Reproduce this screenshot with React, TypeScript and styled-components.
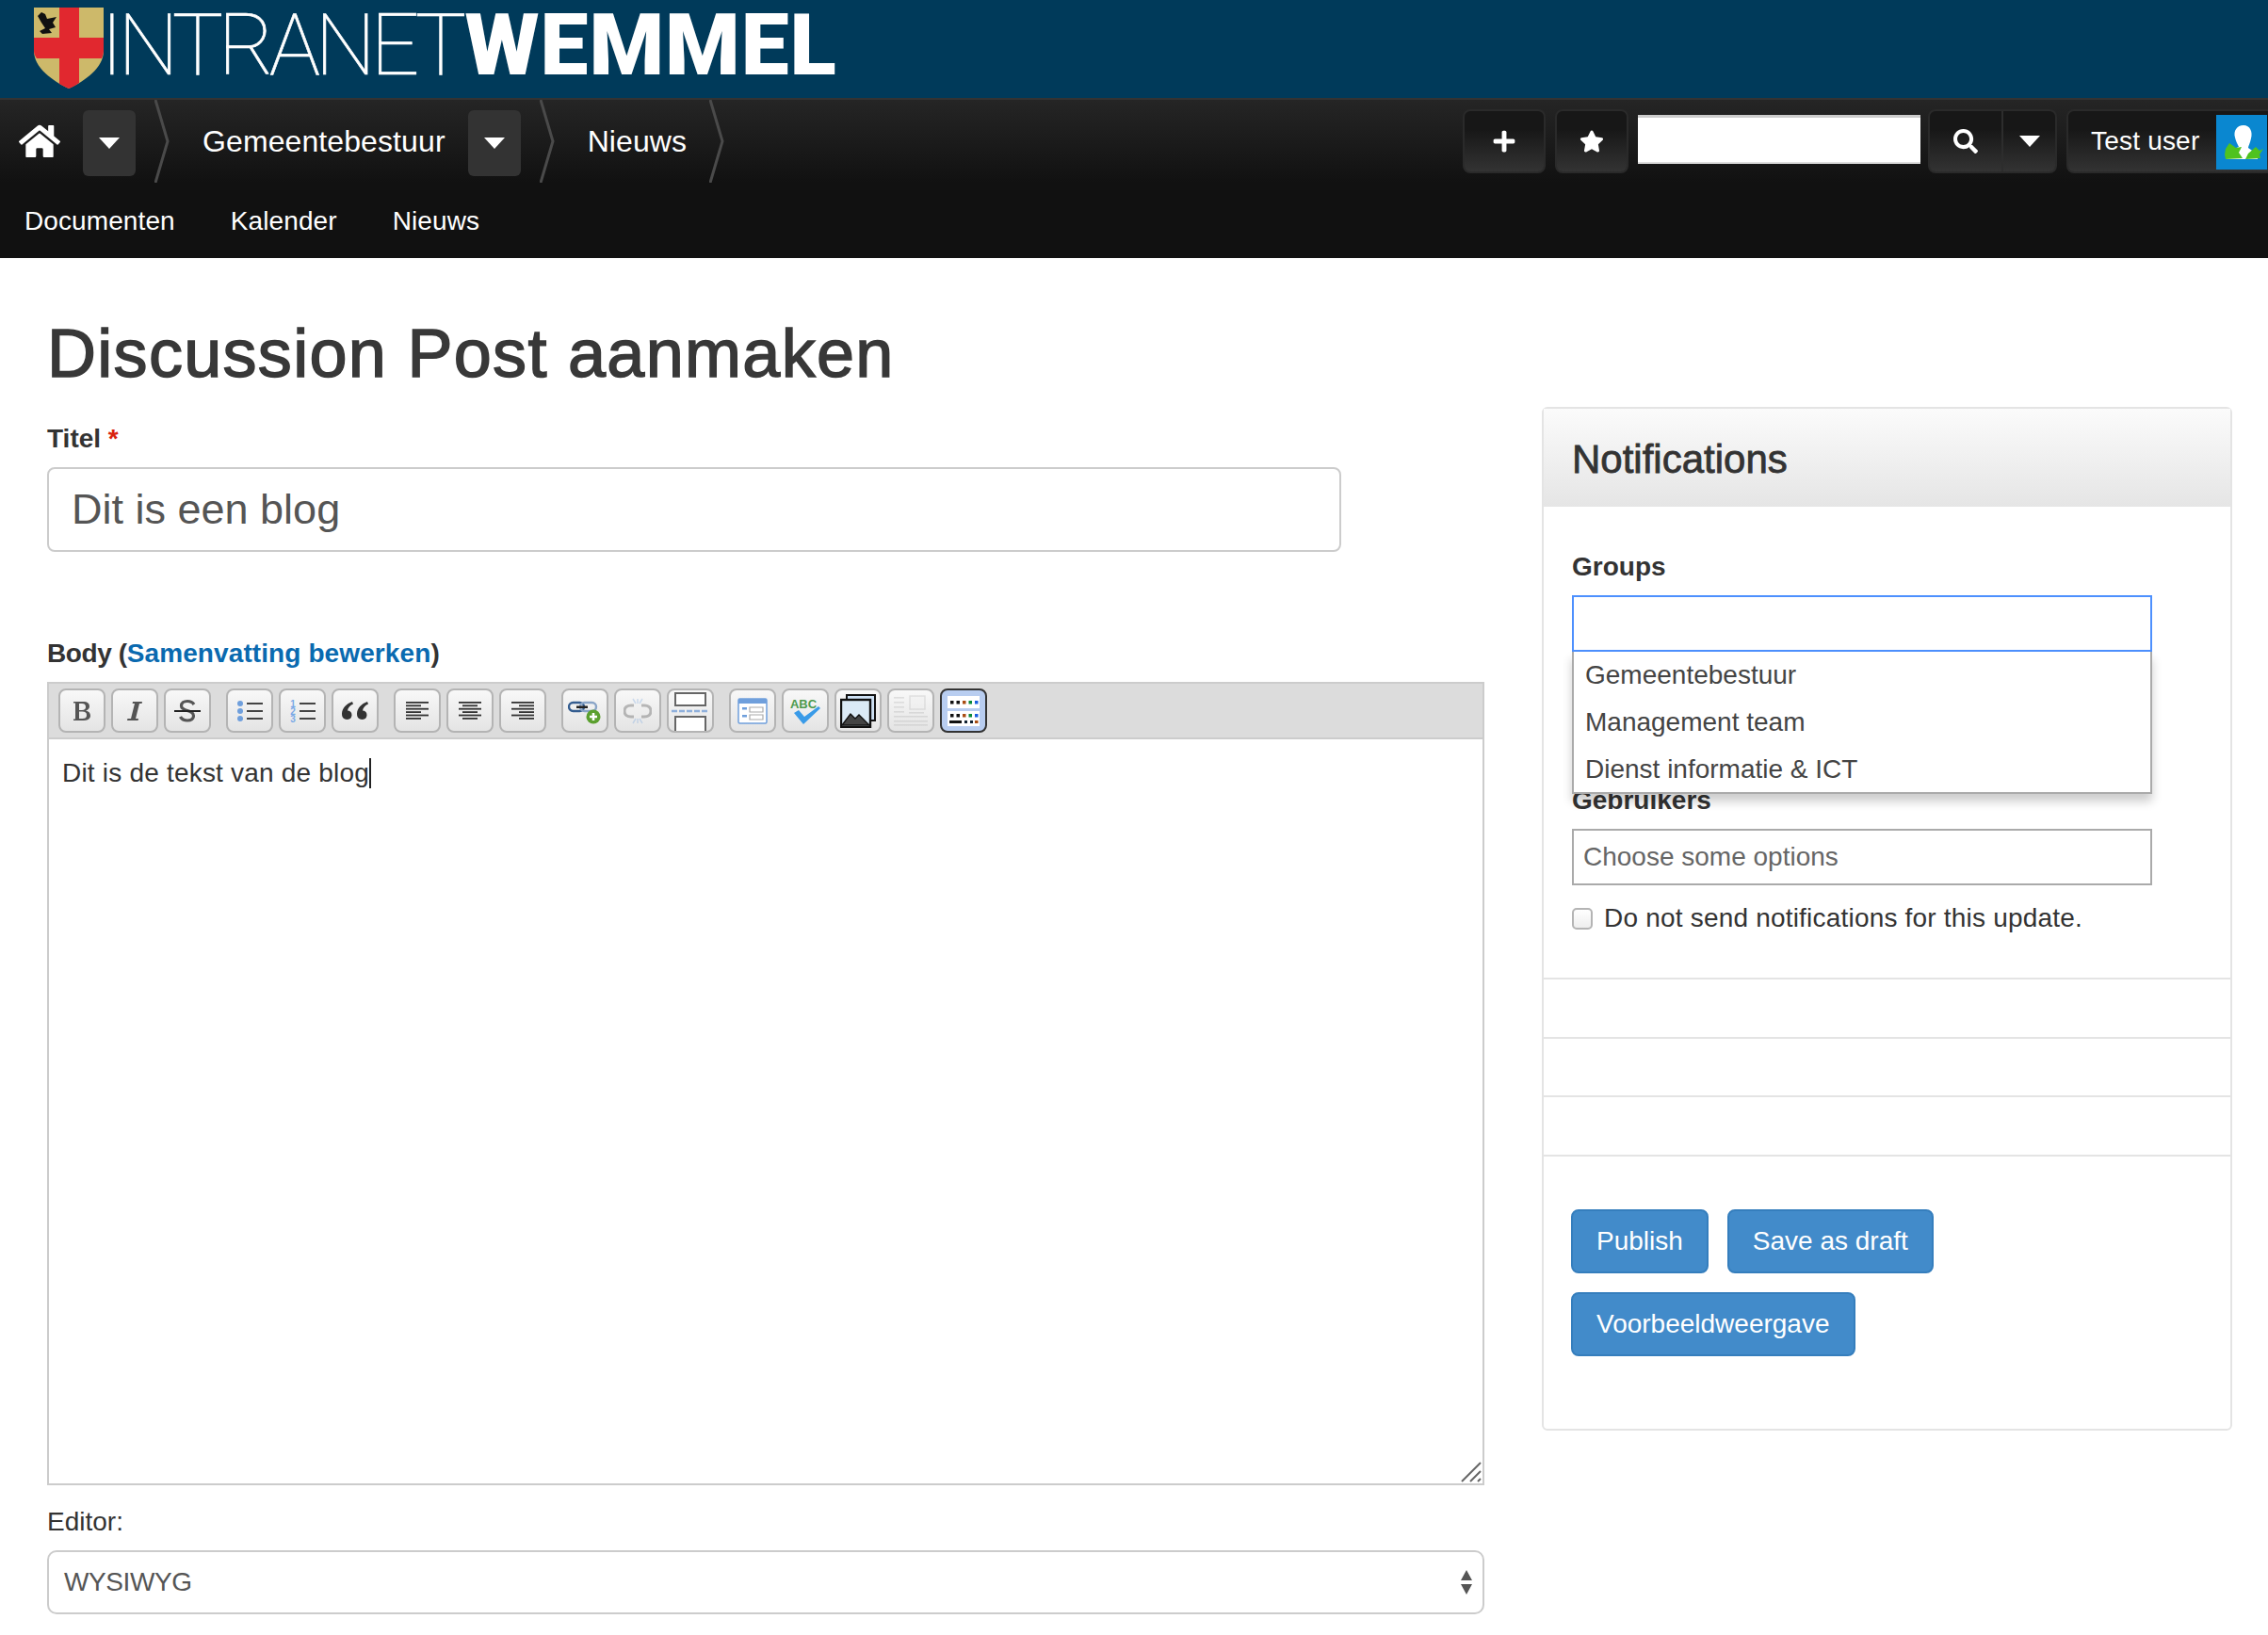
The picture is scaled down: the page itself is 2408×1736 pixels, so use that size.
import styled, { createGlobalStyle } from "styled-components";
import { FaHome, FaPlus, FaSearch, FaStar } from "react-icons/fa";

const GlobalStyle = createGlobalStyle`
  html, body {
    margin: 0;
    background: #fff;
    font-family: "Liberation Sans", Arial, sans-serif;
    font-size: 28px;
    color: #333;
  }
  * { box-sizing: border-box; }
`;

const Page = styled.div`
  width: 2408px;
  height: 1736px;
  overflow: hidden;
`;

const Brand = styled.header`
  height: 106px;
  background: #003a5a;
  border-bottom: 2px solid #333;
  padding: 8px 0 0 36px;
  display: flex;
  align-items: flex-start;
`;

const BrandName = styled.div`
  display: flex;
  height: 91px;
  margin: -5px 0 0 -3px;
  align-items: center;
  color: #fff;
  line-height: 91px;
  white-space: nowrap;
`;

const BrandThin = styled.span`
  font-family: Roboto, sans-serif;
  font-weight: 100;
  font-size: 91px;
  letter-spacing: -5.5px;
  -webkit-text-stroke: 0.7px #fff;
`;

const BrandBold = styled.span`
  margin-left: 4px;
  font-family: Roboto, sans-serif;
  font-weight: 900;
  font-size: 91px;
  letter-spacing: 0.9px;
`;

const NavBar = styled.nav`
  height: 168px;
  background: linear-gradient(#252525 0, #111 88px, #111 100%);
  color: #fff;
`;

const NavTop = styled.div`
  height: 88px;
  padding-left: 20px;
  display: flex;
  align-items: center;
`;

const HomeLink = styled.a`
  display: flex;
  width: 44px;
  margin-right: 24px;
  font-size: 44px;
  color: #fff;
`;

const DropButton = styled.button`
  width: 56px;
  height: 70px;
  margin: 4px 20px 0 0;
  padding: 0;
  border: 0;
  border-radius: 6px;
  background: #333;
  display: flex;
  align-items: center;
  justify-content: center;
`;

const Caret = styled.i`
  display: block;
  width: 0;
  height: 0;
  border-left: 11px solid transparent;
  border-right: 11px solid transparent;
  border-top: 12px solid #fff;
`;

const Crumb = styled.a`
  padding: 0 24px 0 35px;
  font-size: 32px;
  letter-spacing: 0.1px;
  color: #fff;
  white-space: nowrap;
`;

const Tools = styled.div`
  margin-left: auto;
  display: flex;
  gap: 10px;
  align-items: flex-start;
  align-self: flex-start;
  padding-top: 10px;
`;

const ToolButton = styled.button<{ $width: number }>`
  width: ${(p) => p.$width}px;
  height: 68px;
  padding: 0;
  border: 2px solid #2a2a2a;
  border-radius: 8px;
  background: linear-gradient(#171717 30%, #333);
  color: #fff;
  font-size: 26px;
  display: flex;
  align-items: center;
  justify-content: center;
`;

const SearchInput = styled.input`
  width: 300px;
  height: 52px;
  margin: 6px -2px 0 0;
  border: 0;
  border-top: 3px solid #ccc;
  border-bottom: 2px solid #ddd;
  background: #fff;
`;

const SearchGroup = styled.div`
  display: flex;
  width: 137px;
  height: 68px;
  border: 2px solid #2a2a2a;
  border-radius: 8px;
  background: linear-gradient(#171717 30%, #333);
`;

const SearchCell = styled.div<{ $width: number }>`
  width: ${(p) => p.$width}px;
  display: flex;
  align-items: center;
  justify-content: center;
  font-size: 26px;

  & + & {
    border-left: 2px solid #2d2d2d;
  }
`;

const UserButton = styled.div`
  width: 214px;
  height: 68px;
  padding: 4px 0 0 24px;
  border: 2px solid #2a2a2a;
  border-right: 0;
  border-radius: 8px 0 0 8px;
  background: linear-gradient(#171717 30%, #333);
  display: flex;
  align-items: flex-start;
  gap: 18px;
  font-size: 28px;
  letter-spacing: 0.2px;
  line-height: 56px;
  white-space: nowrap;
`;

const NavMenu = styled.div`
  height: 82px;
  padding: 0 0 0 26px;
  display: flex;
  gap: 59px;
  align-items: center;
  font-size: 28px;
  letter-spacing: 0.1px;
`;

const Heading = styled.h1`
  margin: 0;
  padding: 61px 0 15px 50px;
  font-size: 72px;
  line-height: 80px;
  font-weight: 400;
  letter-spacing: 1.3px;
  color: #383838;
  -webkit-text-stroke: 1.5px #383838;
`;

const Columns = styled.div`
  display: grid;
  grid-template-columns: 1526px 733px;
  gap: 61px;
  padding: 2px 0 0 50px;
`;

const Form = styled.div`
  padding-top: 14px;
`;

const Label = styled.label`
  display: block;
  font-weight: 700;
  line-height: 40px;
`;

const BodyLabel = styled(Label)`
  letter-spacing: -0.4px;
`;

const Required = styled.span`
  color: #d9230f;
`;

const TitleInput = styled.div`
  width: 1374px;
  height: 90px;
  margin: 10px 0 88px;
  padding: 0 24px;
  border: 2px solid #ccc;
  border-radius: 8px;
  font-size: 45px;
  line-height: 86px;
  color: #555;
`;

const SummaryLink = styled.a`
  color: #0a6ab0;
  letter-spacing: 0.1px;
`;

const Editor = styled.div`
  position: relative;
  height: 853px;
  margin-top: 10px;
  border: 2px solid #ccc;
  border-top: 0;
`;

const Toolbar = styled.div`
  height: 61px;
  margin: 0 -2px;
  padding: 5px 0 0 10px;
  display: flex;
  gap: 16px;
  background: #dcdcdc;
  border: 2px solid #ccc;
`;

const ToolGroup = styled.div`
  display: flex;
  gap: 6px;
`;

const IconButton = styled.span<{ $active?: boolean; $muted?: boolean }>`
  width: 50px;
  height: 47px;
  border: 2px solid ${(p) => (p.$active ? "#333" : "#b4b4b4")};
  border-radius: 8px;
  background: ${(p) =>
    p.$active ? "#b8cdf0" : "linear-gradient(#f8f8f8, #e4e4e4)"};
  display: flex;
  align-items: center;
  justify-content: center;
  overflow: hidden;

  svg {
    flex: none;
    opacity: ${(p) => (p.$muted ? 0.3 : 1)};
  }
`;

const EditorText = styled.div`
  padding: 16px 14px;
  line-height: 40px;
  letter-spacing: 0.2px;
  color: #333;
`;

const TextCaret = styled.span`
  display: inline-block;
  width: 2px;
  height: 32px;
  vertical-align: -7px;
  background: #222;
`;

const ResizeGrip = styled.svg`
  position: absolute;
  right: 0;
  bottom: 0;
`;

const PlainLabel = styled.label`
  display: block;
  margin-top: 19px;
  line-height: 40px;
`;

const SelectBox = styled.div`
  height: 68px;
  margin-top: 10px;
  padding: 0 10px 0 16px;
  border: 2px solid #ccc;
  border-radius: 10px;
  display: flex;
  align-items: center;
  justify-content: space-between;
  letter-spacing: -0.4px;
  color: #555;
`;

const Panel = styled.aside`
  height: 1087px;
  border: 2px solid #e4e4e4;
  border-radius: 6px;
`;

const PanelHeader = styled.div`
  height: 104px;
  padding-left: 30px;
  background: linear-gradient(#fbfbfb, #e5e5e5);
  font-size: 42px;
  line-height: 108px;
  color: #333;
  -webkit-text-stroke: 0.8px #333;
`;

const PanelForm = styled.div`
  height: 500px;
  padding: 44px 30px 0;
`;

const ChoiceField = styled.div`
  position: relative;
  width: 616px;
  height: 60px;
  margin: 10px 0 138px;
  border: 2px solid #4d90fe;
`;

const ChoiceList = styled.ul`
  position: absolute;
  top: calc(100% + 2px);
  left: -2px;
  right: -2px;
  height: 151px;
  margin: 0;
  padding: 0;
  list-style: none;
  background: #fff;
  border: 2px solid #aaa;
  border-top: 0;
  box-shadow: 0 8px 10px rgba(0, 0, 0, 0.2);
  z-index: 2;
`;

const ChoiceItem = styled.li`
  height: 50px;
  padding-left: 12px;
  line-height: 50px;
  color: #444;
`;

const PlaceholderField = styled.div`
  width: 616px;
  height: 60px;
  margin-top: 10px;
  padding-left: 10px;
  border: 2px solid #aaa;
  line-height: 56px;
  color: #666;
`;

const CheckRow = styled.label`
  display: flex;
  align-items: center;
  gap: 12px;
  margin-top: 15px;
  line-height: 40px;
  letter-spacing: 0.2px;
`;

const CheckBox = styled.span`
  width: 22px;
  height: 23px;
  border: 2px solid #b4b4b4;
  border-radius: 5px;
  background: linear-gradient(#fff, #eee);
`;

const EmptyRow = styled.div`
  height: 62.5px;
  border-top: 2px solid #e4e4e4;
`;

const Actions = styled.div`
  padding: 56px 29px 0;
  width: 560px;
  display: flex;
  flex-wrap: wrap;
  gap: 20px;
`;

const ActionsWrap = styled.div`
  border-top: 2px solid #e4e4e4;
`;

const PrimaryButton = styled.button`
  height: 68px;
  padding: 0 25px;
  border: 2px solid #357ebd;
  border-radius: 8px;
  background: #428bca;
  color: #fff;
  font: inherit;
  white-space: nowrap;
`;

const Shield = () => (
  <svg width="74" height="86" viewBox="0 0 74 86">
    <path d="M0 0H74V46C74 64 54 78 37 86C20 78 0 64 0 46Z" fill="#cdb96a" />
    <path d="M27 0H48V32H74V46C74 49 73 51 72 54H48V80C44 83 40 85 37 86C33 84 30 83 27 81V54H3C1 51 0 49 0 46V32H27Z" fill="#e1282f" />
    <path d="M4 9L8 5L12 7L14 12L24 10L20 16L23 21L16 23L19 27L9 28L6 25L12 22L8 16Z" fill="#111" />
  </svg>
);

const Chevron = () => (
  <svg width="16" height="88" viewBox="0 0 16 88">
    <path d="M1 0L14 44L1 88" fill="none" stroke="#4a4a4a" strokeWidth="3" />
  </svg>
);

const Avatar = () => (
  <svg width="54" height="58" viewBox="0 0 54 58">
    <rect width="54" height="58" fill="#0a87d0" />
    <path d="M29 11C36 11 39 18 37 25C36 30 34 33 34 35L44 42V47H10L14 38L24 34C22 30 21 28 20 24C18 17 22 11 29 11Z" fill="#fff" />
    <path d="M14 30L21 35L27 34L24 40L28 46L10 47L9 42L10 36Z" fill="#4fc21f" />
    <path d="M50 36L46 42L47 46L31 47L34 41L42 34L46 38Z" fill="#4fc21f" />
  </svg>
);

const Lines = ({ x, widths }: { x?: number; widths: number[] }) => (
  <svg width="26" height="26" viewBox="0 0 26 26">
    {widths.map((w, i) => (
      <rect
        key={i}
        x={x === undefined ? 1 : x === 0 ? (24 - w) / 2 + 1 : 25 - w}
        y={3 + i * 3.4}
        width={w}
        height="1.8"
        fill="#333"
      />
    ))}
  </svg>
);

const ListIcon = () => (
  <svg width="30" height="26" viewBox="0 0 30 26">
    {[5, 13, 21].map((y) => (
      <g key={y}>
        <circle cx="5" cy={y} r="3" fill="#6f9fdc" />
        <rect x="12" y={y - 1} width="17" height="2" fill="#444" />
      </g>
    ))}
  </svg>
);

const NumberedIcon = () => (
  <svg width="30" height="26" viewBox="0 0 30 26">
    {[5, 13, 21].map((y, i) => (
      <g key={y}>
        <text
          x="5"
          y={y + 4}
          fontFamily="Liberation Sans"
          fontSize="10"
          fontWeight="700"
          textAnchor="middle"
          fill="#7aa9e6"
        >
          {i + 1}
        </text>
        <rect x="12" y={y - 1} width="17" height="2" fill="#444" />
      </g>
    ))}
  </svg>
);

const BoldIcon = () => (
  <svg width="22" height="24" viewBox="0 0 22 24">
    <path d="M2 2H12C17 2 19 4 19 7C19 9.500 17 11 15 11.500C18 12 20 14 20 17C20 20 17 22 13 22H2V20.500H4V3.500H2ZM8 4V11H11C14 11 15 9.500 15 7.500C15 5 13.500 4 11 4ZM8 12.500V20H11.500C14.500 20 16 19 16 16.500C16 13.500 14.500 12.500 11.500 12.500Z" fill="#555" />
  </svg>
);

const ItalicIcon = () => (
  <svg width="20" height="24" viewBox="0 0 20 24">
    <path d="M8 2H18L17.600 4H15L11 20H14L13.600 22H2L2.400 20H6L10 4H7.600Z" fill="#555" />
  </svg>
);

const StrikeIcon = () => (
  <svg width="30" height="26" viewBox="0 0 30 26">
    <path d="M22 6C20 3 18 2.500 15 2.500C11 2.500 8.500 4.500 8.500 7.500C8.500 14 21.500 11 21.500 18C21.500 21 19 23 15 23C11.500 23 9 22 7.500 19" fill="none" stroke="#555" strokeWidth="3.200" />
    <rect x="1" y="12" width="28" height="2" fill="#222" />
  </svg>
);

const QuoteIcon = () => (
  <svg width="30" height="22" viewBox="0 0 30 22">
    <path d="M12 1C6 3 1 8 1 14C1 18 3.500 20 6.500 20C9.500 20 11.500 18 11.500 15C11.500 12 9.500 10.500 7 10.500C7.500 7.500 9.500 5 13 3.500Z" fill="#333" />
    <path d="M28 1C22 3 17 8 17 14C17 18 19.500 20 22.500 20C25.500 20 27.500 18 27.500 15C27.500 12 25.500 10.500 23 10.500C23.500 7.500 25.500 5 29 3.500Z" fill="#333" />
  </svg>
);

const LinkIcon = () => (
  <svg width="36" height="30" viewBox="0 0 36 30">
    <rect x="1" y="6" width="16" height="9" rx="4.500" fill="none" stroke="#345d90" strokeWidth="2.400" />
    <rect x="13" y="6" width="17" height="9" rx="4.500" fill="none" stroke="#8aa5c8" strokeWidth="2.400" />
    <rect x="9" y="9.500" width="12" height="2.500" fill="#222" />
    <circle cx="27" cy="21" r="7.500" fill="#5ba02f" />
    <path d="M27 17V25M23 21H31" stroke="#fff" strokeWidth="2.600" />
  </svg>
);

const UnlinkIcon = () => (
  <svg width="30" height="28" viewBox="0 0 30 28">
    <path d="M11 8H8C4 8 1 10 1 14C1 18 4 20 8 20H11M19 8H22C26 8 29 10 29 14C29 18 26 20 22 20H19" fill="none" stroke="#333" strokeWidth="3" />
    <path d="M10 1L13 6M20 1L17 6M10 27L13 22M20 27L17 22M15 1V6M15 22V27" stroke="#6f9fdc" strokeWidth="1.500" />
  </svg>
);

const BreakIcon = () => (
  <svg width="42" height="43" viewBox="0 0 42 43">
    <path d="M5 3H37V16H5Z" fill="#fff" stroke="#666" strokeWidth="2" />
    <path d="M5 43V28H37V43" fill="#fff" stroke="#666" strokeWidth="2" />
    <path d="M1 22H41" stroke="#8fb0dc" strokeWidth="2.400" strokeDasharray="6 2" />
  </svg>
);

const TemplateIcon = () => (
  <svg width="32" height="28" viewBox="0 0 32 28">
    <rect x="1" y="1" width="30" height="26" rx="1.500" fill="#fff" stroke="#6f9fdc" strokeWidth="1.500" />
    <rect x="1" y="1" width="30" height="5" fill="#6f9fdc" />
    <rect x="5" y="10" width="5" height="2.500" fill="#6f9fdc" />
    <rect x="5" y="18" width="5" height="2.500" fill="#6f9fdc" />
    <path d="M13 10H27V15H13ZM13 18H27V23H13Z" fill="none" stroke="#aaa" strokeWidth="1.200" />
  </svg>
);

const SpellIcon = () => (
  <svg width="34" height="30" viewBox="0 0 34 30">
    <text
      x="15"
      y="12"
      fontFamily="Liberation Sans"
      fontSize="13"
      fontWeight="700"
      textAnchor="middle"
      fill="#4d9a4d"
    >
      ABC
    </text>
    <path d="M5 17L10 14L16 21L31 10L33 12L15 29Z" fill="#3a9be8" />
  </svg>
);

const ImageIcon = () => (
  <svg width="38" height="36" viewBox="0 0 38 36">
    <rect x="7" y="1" width="30" height="27" fill="#cfe2f5" stroke="#111" strokeWidth="2" />
    <rect x="1" y="6" width="31" height="29" fill="#dbeaf6" stroke="#111" strokeWidth="2.400" />
    <path d="M2 33L11 21L16 26L20 22L31 33Z" fill="#444" stroke="#111" strokeWidth="1.400" />
  </svg>
);

const TeaserIcon = () => (
  <svg width="38" height="36" viewBox="0 0 38 36">
    <g fill="#aaa">
      {[3, 8, 13, 18, 23, 28, 32].map((y) => (
        <rect key={y} x="1" y={y} width={y < 20 ? 11 : 36} height="1.600" />
      ))}
      <rect x="17" y="19" width="16" height="1.600" />
    </g>
    <rect x="18" y="2" width="16" height="14" fill="#eee" stroke="#aaa" strokeWidth="1.400" />
  </svg>
);

const ColorIcon = () => (
  <svg width="36" height="32" viewBox="0 0 36 32">
    <rect x="1" y="0" width="34" height="13" fill="#fff" />
    <rect x="1" y="16" width="34" height="16" fill="#fff" />
    {["#111", "#111", "#a84d12", "#0a8a3a", "#1a5fe0"].map((c, i) => (
      <g key={i}>
        <rect x={4 + i * 6.5} y="5" width="3.500" height="3.500" fill={c} />
        <rect x={4 + i * 6.5} y="19" width="3.500" height="3.500" fill={c} />
      </g>
    ))}
    <rect x="3" y="26" width="13" height="3" fill="#111" />
    <rect x="19" y="26" width="3" height="3" fill="#123" />
    <rect x="25" y="26" width="3" height="3" fill="#123" />
    <rect x="30" y="26" width="3.500" height="3" fill="#a84d12" />
  </svg>
);

const SortArrows = () => (
  <svg width="14" height="28" viewBox="0 0 14 28">
    <path d="M7 1L13 12H1Z M1 16H13L7 27Z" fill="#555" />
  </svg>
);

const App = () => (
  <Page>
    <GlobalStyle />
    <Brand>
      <Shield />
      <BrandName>
        <BrandThin>INTRANET</BrandThin>
        <BrandBold>WEMMEL</BrandBold>
      </BrandName>
    </Brand>

    <NavBar>
      <NavTop>
        <HomeLink>
          <FaHome />
        </HomeLink>
        <DropButton>
          <Caret />
        </DropButton>
        <Chevron />
        <Crumb>Gemeentebestuur</Crumb>
        <DropButton>
          <Caret />
        </DropButton>
        <Chevron />
        <Crumb>Nieuws</Crumb>
        <Chevron />
        <Tools>
          <ToolButton $width={88}>
            <FaPlus />
          </ToolButton>
          <ToolButton $width={78}>
            <FaStar />
          </ToolButton>
          <SearchInput />
          <SearchGroup>
            <SearchCell $width={76}>
              <FaSearch />
            </SearchCell>
            <SearchCell $width={57}>
              <Caret />
            </SearchCell>
          </SearchGroup>
          <UserButton>
            Test user
            <Avatar />
          </UserButton>
        </Tools>
      </NavTop>
      <NavMenu>
        <a>Documenten</a>
        <a>Kalender</a>
        <a>Nieuws</a>
      </NavMenu>
    </NavBar>

    <Heading>Discussion Post aanmaken</Heading>

    <Columns>
      <Form>
        <Label>
          Titel <Required>*</Required>
        </Label>
        <TitleInput>Dit is een blog</TitleInput>

        <BodyLabel>
          Body (<SummaryLink>Samenvatting bewerken</SummaryLink>)
        </BodyLabel>
        <Editor>
          <Toolbar>
            <ToolGroup>
              <IconButton><BoldIcon /></IconButton>
              <IconButton><ItalicIcon /></IconButton>
              <IconButton><StrikeIcon /></IconButton>
            </ToolGroup>
            <ToolGroup>
              <IconButton><ListIcon /></IconButton>
              <IconButton><NumberedIcon /></IconButton>
              <IconButton><QuoteIcon /></IconButton>
            </ToolGroup>
            <ToolGroup>
              <IconButton><Lines widths={[24, 16, 24, 16, 24, 16]} /></IconButton>
              <IconButton><Lines x={0} widths={[24, 16, 24, 16, 24, 16]} /></IconButton>
              <IconButton><Lines x={1} widths={[24, 16, 24, 16, 24, 16]} /></IconButton>
            </ToolGroup>
            <ToolGroup>
              <IconButton><LinkIcon /></IconButton>
              <IconButton $muted><UnlinkIcon /></IconButton>
              <IconButton><BreakIcon /></IconButton>
            </ToolGroup>
            <ToolGroup>
              <IconButton><TemplateIcon /></IconButton>
              <IconButton><SpellIcon /></IconButton>
              <IconButton><ImageIcon /></IconButton>
              <IconButton $muted><TeaserIcon /></IconButton>
              <IconButton $active><ColorIcon /></IconButton>
            </ToolGroup>
          </Toolbar>
          <EditorText>
            Dit is de tekst van de blog
            <TextCaret />
          </EditorText>
          <ResizeGrip width="24" height="24" viewBox="0 0 24 24">
            <path d="M2 22L22 2M11 22L22 11M19 22L22 19" stroke="#666" strokeWidth="2" />
          </ResizeGrip>
        </Editor>
        <PlainLabel>Editor:</PlainLabel>
        <SelectBox>
          WYSIWYG
          <SortArrows />
        </SelectBox>
      </Form>

      <Panel>
        <PanelHeader>Notifications</PanelHeader>
        <PanelForm>
          <Label>Groups</Label>
          <ChoiceField>
            <ChoiceList>
              <ChoiceItem>Gemeentebestuur</ChoiceItem>
              <ChoiceItem>Management team</ChoiceItem>
              <ChoiceItem>Dienst informatie &amp; ICT</ChoiceItem>
            </ChoiceList>
          </ChoiceField>
          <Label>Gebruikers</Label>
          <PlaceholderField>Choose some options</PlaceholderField>
          <CheckRow>
            <CheckBox />
            Do not send notifications for this update.
          </CheckRow>
        </PanelForm>
        <EmptyRow />
        <EmptyRow />
        <EmptyRow />
        <ActionsWrap>
          <Actions>
            <PrimaryButton>Publish</PrimaryButton>
            <PrimaryButton>Save as draft</PrimaryButton>
            <PrimaryButton>Voorbeeldweergave</PrimaryButton>
          </Actions>
        </ActionsWrap>
      </Panel>
    </Columns>
  </Page>
);

export default App;
